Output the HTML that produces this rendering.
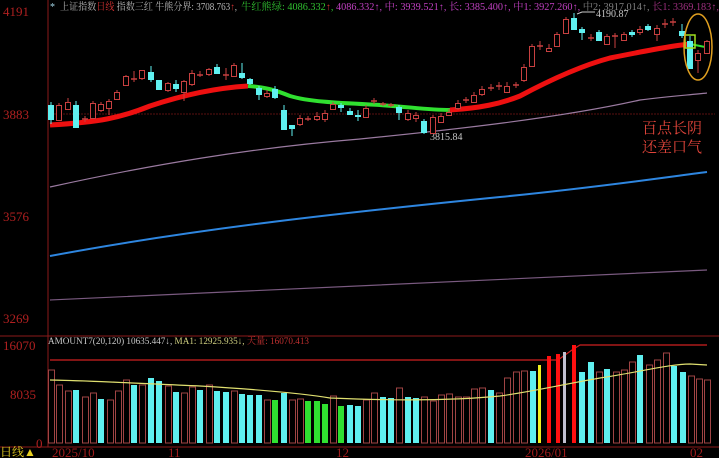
<!DOCTYPE html>
<html><head><meta charset="utf-8"><style>
html,body{margin:0;padding:0;background:#000;width:719px;height:458px;overflow:hidden}
svg{display:block}
text{font-family:"Liberation Serif","Noto Serif CJK SC",serif}
</style></head><body>
<svg id="s" width="719" height="458" viewBox="0 0 719 458" xmlns="http://www.w3.org/2000/svg">
<rect width="719" height="458" fill="#000"/>
<line x1="48" y1="0" x2="48" y2="447" stroke="#8b1a1a" stroke-width="1"/>
<line x1="0" y1="336" x2="719" y2="336" stroke="#8b1a1a"/>
<line x1="0" y1="447" x2="719" y2="447" stroke="#8b1a1a"/>
<line x1="48" y1="114" x2="715" y2="114" stroke="#5a1010" stroke-dasharray="2,1"/>
<g fill="#b02020" font-size="13">
<text x="3" y="16">4191</text><text x="3" y="119">3883</text><text x="3" y="221">3576</text><text x="3" y="323">3269</text>
<text x="3" y="350">16070</text><text x="10" y="399">8035</text><text x="36" y="448">0</text>
</g>
<g fill="#a01c1c" font-size="13">
<text x="52" y="457">2025/10</text><text x="168" y="457">11</text><text x="336" y="457">12</text><text x="525" y="457">2026/01</text><text x="690" y="457">02</text>
</g>
<text x="0" y="456" font-size="12" fill="#e8d020" font-family="Liberation Sans,Noto Sans CJK SC,sans-serif">日线▲</text>
<g font-size="10">
<text x="50" y="10" fill="#9fd0e0">*</text>
<text x="60" y="10" fill="#b8b8b8" textLength="177" lengthAdjust="spacingAndGlyphs">上证指数<tspan fill="#d03030">日线</tspan> 指数三红 牛熊分界: 3708.763<tspan fill="#d03030">↑</tspan>,</text>
<text x="241" y="10" fill="#30c030" textLength="478" lengthAdjust="spacingAndGlyphs">牛红熊绿: 4086.332<tspan fill="#d03030">↑</tspan>, <tspan fill="#c040c0">4086.332↑, 中: 3939.521↑, 长: 3385.400↑, 中1: 3927.260↑,</tspan> <tspan fill="#808080">中2: 3917.014↑,</tspan> <tspan fill="#a03080">长1: 3369.183↑,</tspan></text>
<text x="48" y="344" fill="#c8c8c8" font-size="9.5" textLength="261" lengthAdjust="spacingAndGlyphs">AMOUNT7(20,120) 10635.447↓, <tspan fill="#d0d080">MA1: 12925.935↓,</tspan> <tspan fill="#c03030">天量: 16070.413</tspan></text>
</g>
<path d="M50,187 C150,165 250,148 360,139 C450,130 560,118 640,100 C670,96 690,95 707,93" stroke="#9a7aa0" fill="none" stroke-width="1.2"/>
<path d="M50,256 C200,228 350,212 500,197 C600,187 660,178 707,172" stroke="#2e86e0" fill="none" stroke-width="2"/>
<path d="M50,300 C250,290 450,282 707,270" stroke="#7a5a80" fill="none" stroke-width="1.2"/>
<path d="M50,125 C100,122 120,118 150,106 C180,96 215,88 248,86" stroke="#ee1010" fill="none" stroke-width="5"/>
<path d="M248,86 C265,87 275,90 290,96 C310,102 340,103 380,105 C410,107 430,110 450,110" stroke="#30e030" fill="none" stroke-width="4"/>
<path d="M450,110 C480,108 500,104 520,96 C550,80 580,66 610,58 C640,52 670,46 690,44" stroke="#ee1010" fill="none" stroke-width="5"/>
<path d="M690,44 L705,47" stroke="#30e030" fill="none" stroke-width="2"/>
<text x="596" y="17" fill="#c8c8c8" font-size="10">4190.87</text>
<path d="M577,14 L582,12 L595,12" stroke="#c8c8c8" fill="none"/>
<text x="430" y="140" fill="#c8c8c8" font-size="10">3815.84</text>
<g id="c"></g>
<rect x="685" y="35" width="10" height="13" fill="none" stroke="#a0e020" stroke-width="1.5"/>
<ellipse cx="698" cy="47" rx="14" ry="33" fill="none" stroke="#e0a020" stroke-width="1.5"/>
<g font-family="Liberation Sans,Noto Sans CJK SC,sans-serif">
<text x="642" y="133" fill="#e0443a" font-size="15">百点长阴</text>
<text x="642" y="152" fill="#e0443a" font-size="15">还差口气</text>
</g>
<path d="M50,360 L558,360 L572,350 L580,345 L707,345" stroke="#d02020" fill="none" stroke-width="1.2"/>
<g id="v"></g>
<path d="M50,380 C100,381 150,384 200,386 C250,389 300,393 330,398 C400,401 460,400 500,396 C530,392 560,385 600,378 C640,372 670,364 690,364 L707,365" stroke="#e0e070" fill="none" stroke-width="1.2"/>
</svg>
<script>
var NS="http://www.w3.org/2000/svg";
function el(p,t,a){var e=document.createElementNS(NS,t);for(var k in a)e.setAttribute(k,a[k]);p.appendChild(e);}
var C=document.getElementById('c');
var d=[[51,'c',105,120,102,124],[59,'r',105,120,103,121],[68,'r',102,109,98,110],[76,'c',105,128,101,128],[85,'x',119,119,116,122],[93,'r',103,118,101,119],[101,'r',104,110,102,112],[109,'r',101,108,99,115],[117,'r',92,99,90,100],[126,'r',76,85,75,86],[134,'x',79,79,71,82],[142,'r',70,78,70,80],[151,'c',72,80,66,82],[159,'c',80,90,80,90],[168,'r',83,90,82,92],[176,'c',84,89,80,92],[184,'r',81,92,80,101],[192,'r',73,84,70,86],[200,'x',75,75,71,77],[209,'r',69,74,68,76],[217,'c',67,74,64,74],[226,'x',75,75,68,80],[234,'r',65,76,63,77],[242,'c',73,78,63,79],[250,'c',79,84,78,85],[259,'c',88,95,86,100],[267,'r',93,96,90,98],[275,'c',89,98,86,99],[284,'c',110,130,105,130],[292,'c',125,129,125,136],[300,'r',118,124,115,126],[308,'x',119,119,116,121],[317,'r',116,119,112,121],[325,'r',113,119,110,122],[333,'r',104,109,102,110],[341,'c',105,108,103,112],[350,'c',111,115,108,115],[358,'c',115,117,110,121],[366,'r',108,117,105,118],[374,'x',101,101,98,104],[383,'x',104,104,102,106],[391,'x',105,105,103,107],[399,'c',107,113,105,120],[408,'r',113,119,110,121],[416,'r',115,118,112,122],[424,'c',121,133,119,134],[433,'r',117,133,115,134],[441,'r',116,122,113,123],[449,'r',112,115,109,116],[458,'r',103,108,100,110],[466,'x',100,100,97,103],[474,'r',95,102,92,103],[482,'r',89,94,86,96],[491,'x',88,88,84,91],[499,'x',86,86,82,90],[507,'r',86,92,82,93],[516,'x',85,85,82,88],[524,'r',67,80,64,82],[532,'r',46,66,44,67],[540,'x',46,46,41,50],[549,'r',48,51,44,52],[557,'r',34,46,32,47],[566,'r',19,33,17,34],[574,'c',18,30,13,30],[582,'c',29,33,27,40],[591,'x',38,38,34,41],[599,'c',32,41,30,41],[607,'r',36,44,34,45],[615,'x',36,36,33,48],[624,'r',34,40,32,41],[632,'c',32,35,30,37],[640,'r',29,32,26,35],[648,'c',26,30,24,31],[657,'r',28,34,25,41],[665,'x',24,24,19,28],[673,'x',22,22,18,26],[682,'c',31,36,24,38],[690,'c',41,69,36,69],[698,'r',53,60,50,73],[707,'r',41,53,40,54]];
d.forEach(function(a){var x=a[0],t=a[1],col=t=='c'?'#5ff0f0':'#c84040';
el(C,'line',{x1:x,y1:a[4],x2:x,y2:a[5],stroke:col,'stroke-width':1});
if(t=='x')el(C,'line',{x1:x-3,y1:a[2],x2:x+3,y2:a[2],stroke:'#c84040','stroke-width':1.5});
else if(t=='c')el(C,'rect',{x:x-3,y:a[2],width:6,height:Math.max(1,a[3]-a[2]),fill:col});
else el(C,'rect',{x:x-2.5,y:a[2]+.5,width:5,height:Math.max(1,a[3]-a[2]),fill:'#000',stroke:col,'stroke-width':1});
});
var V=document.getElementById('v');
var v=[[51,'h',370],[59,'h',385],[68,'h',391],[76,'c',390],[85,'h',397],[93,'h',393],[101,'c',399],[110,'h',400],[118,'h',391],[126,'h',380],[134,'c',385],[142,'h',385],[151,'c',378],[159,'c',381],[168,'h',386],[176,'c',392],[184,'h',393],[192,'h',387],[200,'c',390],[209,'h',385],[217,'c',391],[226,'c',392],[234,'h',391],[242,'c',394],[250,'c',395],[259,'c',395],[267,'h',400],[275,'g',400],[284,'c',393],[292,'h',400],[300,'h',399],[308,'g',401],[317,'g',401],[325,'g',404],[333,'h',396],[341,'g',406],[350,'c',405],[358,'c',406],[366,'h',400],[374,'h',393],[383,'c',397],[391,'c',398],[399,'h',388],[408,'c',397],[416,'c',398],[424,'h',397],[433,'h',401],[441,'h',395],[449,'h',394],[458,'h',397],[466,'h',397],[474,'h',389],[482,'h',388],[491,'c',390],[499,'h',393],[507,'h',378],[516,'h',372],[524,'h',371],[533,'c',371],[541,'y',365],[549,'R',356],[558,'R',354],[566,'w',352],[574,'R',345],[582,'c',372],[591,'c',362],[599,'h',372],[607,'c',369],[616,'h',372],[624,'h',370],[632,'h',362],[640,'c',355],[649,'h',365],[657,'h',360],[666,'h',353],[674,'c',366],[683,'c',372],[691,'h',376],[699,'h',379],[707,'h',380]];
v.forEach(function(a){var x=a[0],t=a[1],y=a[2],h=443-y;
if(t=='h')el(V,'rect',{x:x-2.5,y:y,width:6,height:h,fill:'none',stroke:'#a04444','stroke-width':1});
else if(t=='R')el(V,'rect',{x:x-2,y:y,width:4,height:h,fill:'#ff1010'});
else{var col={c:'#5ff0f0',g:'#30e030',y:'#f0f020',w:'#c0c0d0'}[t];el(V,'rect',{x:x-3,y:y,width:(t=='y'||t=='w')?3:6,height:h,fill:col});}
});
</script>
</body></html>
